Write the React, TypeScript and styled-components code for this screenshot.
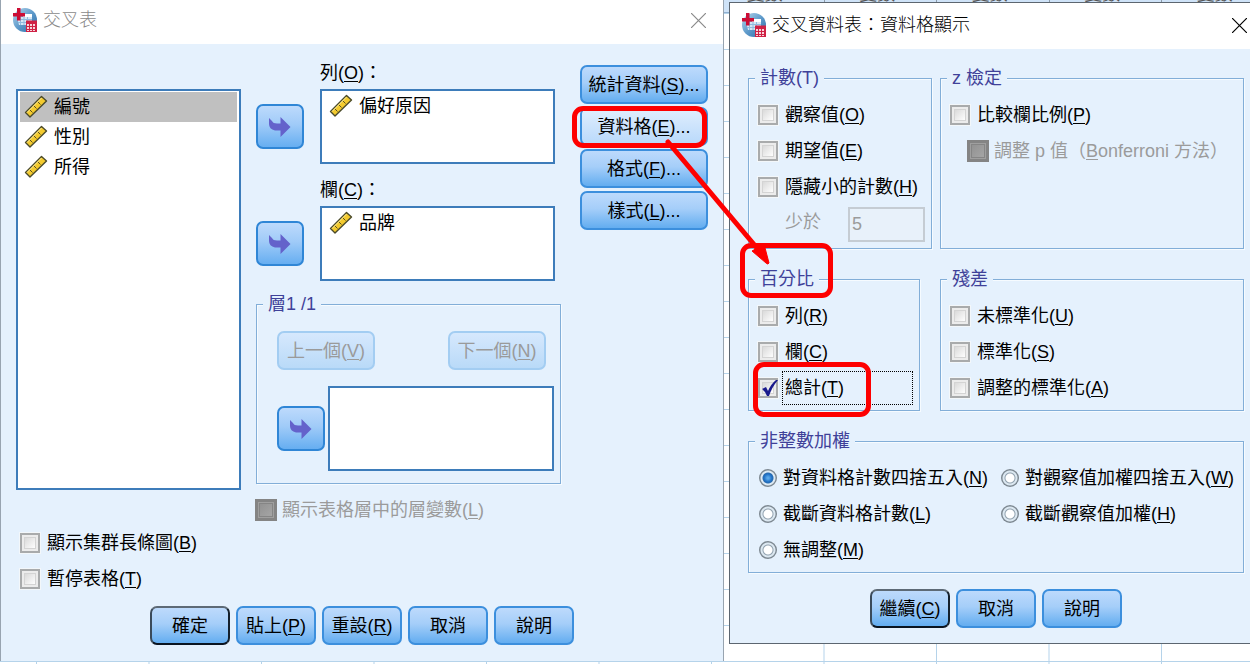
import React, { useState } from 'react';
import styled, { createGlobalStyle, css } from 'styled-components';

const GlobalStyle = createGlobalStyle`
  *, *::before, *::after { box-sizing: border-box; }
  body { margin: 0; background: #fff; }
  body, button, input {
    font-family: 'Liberation Sans', 'Noto Sans CJK TC', sans-serif;
    font-size: 18px;
    line-height: 24px;
    color: #000;
  }
`;

/* ---------- Desktop with the data sheet behind the dialogs ---------- */

const Desktop = styled.main`
  display: grid;
  min-height: 100vh;
  overflow: hidden;
`;

const Sheet = styled.div`
  grid-area: 1 / 1;
  min-width: 0;
  background-color: #fff;
  background-image:
    linear-gradient(to right, #b5d3ea 1px, transparent 1px),
    linear-gradient(to bottom, #b5d3ea 1px, transparent 1px);
  background-size: 9% 100%, 100% 36px;
  background-position: 36px 0, 0 13px;
`;

const SheetHead = styled.div`
  display: flex;
  height: 13px;
  overflow: hidden;
  background: #cfe3f8;
  border-bottom: 1px solid #8eafd0;
  &::before {
    content: '';
    flex: 0 0 36px;
  }
`;

const SheetHeadCell = styled.span`
  flex: 0 0 9%;
  margin-top: -18px;
  padding-right: 6px;
  text-align: center;
  color: #555;
  border-left: 1px solid #8c9aa8;
`;

const Windows = styled.div`
  grid-area: 1 / 1;
  display: grid;
  grid-template-columns: minmax(0, 724fr) minmax(0, 521fr);
  column-gap: 5px;
  align-items: start;
`;

/* ---------- Window frame ---------- */

const Frame = styled.section<{ $active?: boolean }>`
  background: #e5f1fd;
  border: 0 solid ${p => (p.$active ? '#5c6670' : '#98a4b0')};
  border-width: ${p => (p.$active ? '1px 0 1px 1px' : '0 1px')};
  margin-top: ${p => (p.$active ? 2 : 0)}px;
`;

const TitleBar = styled.header<{ $active?: boolean }>`
  display: flex;
  align-items: center;
  gap: 6px;
  height: ${p => (p.$active ? 46 : 44)}px;
  padding: ${p => (p.$active ? '0 3px 2px 12px' : '0 17px 4px 12px')};
  background: #fff;
  color: ${p => (p.$active ? '#000' : '#8a8a8a')};
`;

const Title = styled.h1`
  flex: 1;
  margin: 0;
  font-size: 18px;
  font-weight: 300;
  line-height: 24px;
`;

const CloseButton = styled.button`
  display: flex;
  padding: 0;
  border: 0;
  background: none;
  color: inherit;
`;

/* ---------- Controls ---------- */

const PushButton = styled.button<{ $primary?: boolean; $hot?: boolean; $wide?: boolean }>`
  height: 39px;
  width: ${p => (p.$wide ? '100%' : '80px')};
  padding: 0;
  white-space: nowrap;
  border: 2px solid #3c8fdd;
  border-radius: 7px;
  background: linear-gradient(#bddafc, #a5cef9 45%, #63adf0);
  ${p => p.$hot && css`background: linear-gradient(#e0eefd, #b9d9fb);`}
  ${p => p.$primary && css`border-color: #5d6a76 #14202c #0a1420 #3a4a5a;`}
  &:disabled {
    width: 98px;
    color: #9a9a9a;
    border-color: #a3cdf2;
    background: linear-gradient(#d6e8fd, #b9daf8);
  }
`;

const MoveButton = styled.button`
  display: flex;
  align-items: center;
  justify-content: center;
  width: 48px;
  height: 45px;
  padding: 0;
  border: 2px solid #2f86d6;
  border-radius: 7px;
  background: linear-gradient(#bddafc, #a0cbf8 45%, #66aef1);
`;

const Row = styled.label<{ $disabled?: boolean; $indent?: boolean }>`
  position: relative;
  display: flex;
  align-items: center;
  gap: ${p => (p.$disabled ? 5 : 7)}px;
  height: 36px;
  margin-left: ${p => (p.$indent ? 17 : 0)}px;
  white-space: nowrap;
  color: ${p => (p.$disabled ? '#9b9b9b' : '#000')};
`;

const Box = styled.input.attrs({ type: 'checkbox' })`
  appearance: none;
  flex: none;
  width: 20px;
  height: 20px;
  margin: 0;
  border: 2px solid #a9abac;
  background: linear-gradient(135deg, #cfcfcf, #fdfdfd 80%);
  box-shadow: 0 0 0 1px #f3f7fa, inset 0 0 0 2px #ececec, inset 0 0 0 3px #d4d4d4;
  &:disabled {
    width: 22px;
    height: 22px;
    border: 3px solid #848484;
    background: linear-gradient(135deg, #8f8f8f, #a8a8a8);
    box-shadow: inset 0 0 0 1px #9f9f9f, inset 0 0 0 2px #858585;
  }
`;

const CheckMark = styled.svg`
  position: absolute;
  left: 3px;
  top: 9px;
  pointer-events: none;
`;

const FocusText = styled.span`
  flex: 1;
  height: 34px;
  margin: 0 6px 0 -3px;
  padding: 4px 2px;
  border: 1px dotted #000;
`;

const Radio = styled.input.attrs({ type: 'radio' })`
  appearance: none;
  flex: none;
  width: 18px;
  height: 18px;
  margin: 0;
  border-radius: 50%;
  background: radial-gradient(circle, #fff 3px, #fff 4px, #8fa0ae 5px, #dfeaf2 6px, #d9e6f0 7px, #7c8790 8px, #7c8790 9px);
  &:checked {
    background: radial-gradient(circle, #5aa7e8 1px, #1f6fc4 4px, #2a6cb0 5px, #e3eef6 6px, #d9e6f0 7px, #7c8790 8px, #7c8790 9px);
  }
`;

const RadioRow = styled(Row)`
  gap: 6px;
`;

const Key = styled.u`
  text-decoration-thickness: 1px;
  text-underline-offset: 2px;
`;

/* ---------- Group boxes ---------- */

const Group = styled.fieldset<{ $after?: number }>`
  min-width: 0;
  margin: 0 ${p => p.$after ?? 0}px 0 0;
  padding: 0 0 0 6px;
  border: 1px solid #82aed8;
  box-shadow: 1px 1px 0 #f6fbff, inset 1px 1px 0 #f6fbff;
`;

const Legend = styled.legend`
  position: relative;
  padding: 0 5px;
  background: #e5f1fd;
  color: #3f4199;
`;

const GroupBody = styled.div`
  padding: 7px 0 4px 3px;
`;

/* ---------- Crosstabs dialog ---------- */

const CrosstabsBody = styled.form`
  padding: 17px 15px 16px;
`;

const Columns = styled.div`
  display: grid;
  grid-template-columns: minmax(120px, 1fr) 339px 128px;
`;

const ListBox = styled.ul<{ $height?: number; $source?: boolean }>`
  flex: 1;
  min-width: 0;
  margin: 0;
  padding: ${p => (p.$source ? '1px 2px' : '0 2px')};
  height: ${p => (p.$height ? `${p.$height}px` : 'auto')};
  list-style: none;
  background: #fff;
  border: 2px solid #3d7cba;
  ${p => p.$source && css`margin: 28px 0 0;`}
`;

const Variable = styled.li<{ $selected?: boolean; $inset?: number }>`
  display: flex;
  align-items: center;
  gap: 6px;
  height: 30px;
  padding-left: ${p => p.$inset ?? 4}px;
  background: ${p => (p.$selected ? '#c0c0c0' : 'transparent')};
`;

const Middle = styled.div`
  padding: 0 19px 6px 15px;
`;

const Target = styled.div`
  display: grid;
  grid-template-columns: 48px 1fr;
  column-gap: 16px;
  row-gap: 4px;
  align-items: center;
  margin: 0 6px 14px 0;
  & + & { margin-bottom: 11px; }
`;

const TargetLabel = styled.span`
  grid-column: 2;
`;

const LayerBody = styled.div`
  padding: 15px 6px 12px 14px;
`;

const LayerNav = styled.div`
  display: flex;
  justify-content: space-between;
  padding-right: 8px;
  margin-bottom: 16px;
`;

const LayerRow = styled.div`
  display: flex;
  align-items: center;
  gap: 3px;
`;

const Commands = styled.div`
  display: flex;
  flex-direction: column;
  gap: 3px;
  padding-top: 4px;
`;

const CommandSlot = styled.div`
  position: relative;
  height: 39px;
`;

const LayerOption = styled.div`
  display: flex;
  height: 35px;
  padding: 2px 0 0 239px;
`;

const Options = styled.div`
  padding-left: 4px;
`;

const Actions = styled.footer<{ $gap: number }>`
  display: flex;
  justify-content: center;
  gap: 6px;
  margin-top: ${p => p.$gap}px;
`;

/* ---------- Cell display dialog ---------- */

const CellsBody = styled.form`
  display: flex;
  flex-direction: column;
  gap: 18px;
  padding: 17px 6px 15px 18px;
`;

const Pair = styled.div`
  display: grid;
  grid-template-columns: 192px 1fr;
`;

const LessThan = styled.label`
  display: flex;
  gap: 27px;
  height: 39px;
  padding: 2px 6px 2px 27px;
  line-height: 30px;
  white-space: nowrap;
  color: #9b9b9b;
`;

const CountInput = styled.input`
  flex: 1;
  min-width: 0;
  height: 35px;
  padding: 0 2px;
  border: 2px solid #c5ccd3;
  background: #e8f1fa;
  color: #9b9b9b;
`;

const RadioGrid = styled.div`
  display: grid;
  grid-template-columns: 242px 1fr;
  padding: 7px 0 4px 4px;
`;

/* ---------- Red pen annotations ---------- */

const Ring = styled.span<{ $inset: string }>`
  position: absolute;
  inset: ${p => p.$inset};
  z-index: 5;
  border: 5px solid #fe0000;
  border-radius: 11px;
  pointer-events: none;
`;

const Pointer = styled.svg`
  position: absolute;
  left: 84px;
  top: 32px;
  z-index: 6;
  pointer-events: none;
`;

/* ---------- Icons ---------- */

const AppIcon = () => (
  <svg width="24" height="24" viewBox="0 0 24 24" aria-hidden="true">
    <defs>
      <linearGradient id="globe" x1="0" y1="0" x2="1" y2="1">
        <stop offset="0" stopColor="#b9d7ec" />
        <stop offset="0.5" stopColor="#5f9bcb" />
        <stop offset="1" stopColor="#2c6ba6" />
      </linearGradient>
    </defs>
    <circle cx="12" cy="12" r="12" fill="url(#globe)" />
    <path d="M4 9h15v8H6z" fill="#d5e6f4" />
    <path d="M10 6h9v3h-9z" fill="#fff" />
    <path d="M4 11.500h15M5 14.500h9M7.500 9v8M11 9v8M14.500 9v5" stroke="#8fbbdf" fill="none" />
    <path d="M4 0h3.500v5H12v3.500H7.500V12.500H4V8.500H0V5h4z" fill="#cc0d35" />
    <path d="M13 12.500h11V24H13z" fill="#cf2145" />
    <path d="M14 16h2v2h-2zM17 16h2v2h-2zM20 16h2v2h-2zM14 19h2v2h-2zM17 19h2v2h-2zM20 19h2v2h-2zM14 22h2v1h-2zM17 22h2v1h-2zM20 22h2v1h-2z" fill="#f6d3da" />
  </svg>
);

const CloseIcon = () => (
  <svg width="15" height="15" viewBox="0 0 15 15" aria-hidden="true">
    <path d="M0 0l15 15M15 0L0 15" stroke="currentColor" strokeWidth="1.200" />
  </svg>
);

const RulerIcon = () => (
  <svg width="24" height="24" viewBox="0 0 24 24" aria-hidden="true">
    <path d="M1.500 17.500L17.500 1.500l5 4.500L6 22z" fill="#f3ca2e" stroke="#4a4a2a" strokeWidth="1.400" strokeLinejoin="round" />
    <path d="M3 17.500L17.500 3" stroke="#fff0a0" strokeWidth="1" />
    <path d="M6 15l2.500 2.500M10 11l2.500 2.500M14 7l2.500 2.500" stroke="#5c5220" strokeWidth="1" />
  </svg>
);

const ArrowIcon = () => (
  <svg width="22" height="20" viewBox="0 0 22 20" aria-hidden="true">
    <path d="M0 1l3 3q1 2.500 5 2.500h3.500V0L21.500 10 11.500 20v-6.500H6Q0 12 0 7z" fill="#6462cb" />
  </svg>
);

/* ---------- Composite parts ---------- */

const Hot = ({ text, k, tail = '' }: { text: string; k: string; tail?: string }) => (
  <span>{text}(<Key>{k}</Key>){tail}</span>
);

type CheckProps = { text: string; k: string; disabled?: boolean };

const Check = ({ text, k, disabled }: CheckProps) => (
  <Row $disabled={disabled}>
    <Box disabled={disabled} />
    <Hot text={text} k={k} />
  </Row>
);

const TitleRow = ({ title, active }: { title: string; active?: boolean }) => (
  <TitleBar $active={active}>
    <AppIcon />
    <Title>{title}</Title>
    <CloseButton type="button" aria-label="關閉"><CloseIcon /></CloseButton>
  </TitleBar>
);

const TargetField = ({ text, k, variable }: { text: string; k: string; variable: string }) => (
  <Target>
    <TargetLabel><Hot text={text} k={k} tail="：" /></TargetLabel>
    <MoveButton type="button" aria-label={text}><ArrowIcon /></MoveButton>
    <ListBox $height={75} aria-label={text}>
      <Variable $inset={5}><RulerIcon />{variable}</Variable>
    </ListBox>
  </Target>
);

const variables = ['編號', '性別', '所得'];

const roundings = [
  ['對資料格計數四捨五入', 'N'],
  ['對觀察值加權四捨五入', 'W'],
  ['截斷資料格計數', 'L'],
  ['截斷觀察值加權', 'H'],
  ['無調整', 'M'],
];

const CrosstabsDialog = () => (
  <Frame>
    <TitleRow title="交叉表" />
    <CrosstabsBody onSubmit={e => e.preventDefault()}>
      <Columns>
        <ListBox $source role="listbox" aria-label="變數">
          {variables.map((name, i) => (
            <Variable key={name} role="option" aria-selected={i === 0} $selected={i === 0}>
              <RulerIcon />{name}
            </Variable>
          ))}
        </ListBox>
        <Middle>
          <TargetField text="列" k="O" variable="偏好原因" />
          <TargetField text="欄" k="C" variable="品牌" />
          <Group>
            <Legend>層1 /1</Legend>
            <LayerBody>
              <LayerNav>
                <PushButton type="button" disabled><Hot text="上一個" k="V" /></PushButton>
                <PushButton type="button" disabled><Hot text="下一個" k="N" /></PushButton>
              </LayerNav>
              <LayerRow>
                <MoveButton type="button" aria-label="層"><ArrowIcon /></MoveButton>
                <ListBox $height={85} aria-label="層" />
              </LayerRow>
            </LayerBody>
          </Group>
        </Middle>
        <Commands>
          <CommandSlot>
            <PushButton type="button" $wide><Hot text="統計資料" k="S" tail="..." /></PushButton>
          </CommandSlot>
          <CommandSlot>
            <PushButton type="button" $wide $hot><Hot text="資料格" k="E" tail="..." /></PushButton>
            <Ring $inset="-1px 1px -2px -8px" />
            <Pointer width="110" height="130" viewBox="0 0 110 130" aria-hidden="true">
              <path d="M4 3l94 112" stroke="#fe0000" strokeWidth="5" strokeLinecap="round" />
              <path d="M88 112l12-7 5 19q-1 2-3 0z" fill="#fe0000" stroke="#fe0000" strokeLinejoin="round" />
            </Pointer>
          </CommandSlot>
          <CommandSlot>
            <PushButton type="button" $wide><Hot text="格式" k="F" tail="..." /></PushButton>
          </CommandSlot>
          <CommandSlot>
            <PushButton type="button" $wide><Hot text="樣式" k="L" tail="..." /></PushButton>
          </CommandSlot>
        </Commands>
      </Columns>
      <LayerOption><Check text="顯示表格層中的層變數" k="L" disabled /></LayerOption>
      <Options>
        <Check text="顯示集群長條圖" k="B" />
        <Check text="暫停表格" k="T" />
      </Options>
      <Actions $gap={9}>
        <PushButton type="submit" $primary>確定</PushButton>
        <PushButton type="button"><Hot text="貼上" k="P" /></PushButton>
        <PushButton type="button"><Hot text="重設" k="R" /></PushButton>
        <PushButton type="button">取消</PushButton>
        <PushButton type="button">說明</PushButton>
      </Actions>
    </CrosstabsBody>
  </Frame>
);

const CellDisplayDialog = () => {
  const [total, setTotal] = useState(true);
  return (
    <Frame $active>
      <TitleRow title="交叉資料表：資料格顯示" active />
      <CellsBody onSubmit={e => e.preventDefault()}>
        <Pair>
          <Group $after={8}>
            <Legend>計數(T)</Legend>
            <GroupBody>
              <Check text="觀察值" k="O" />
              <Check text="期望值" k="E" />
              <Check text="隱藏小的計數" k="H" />
              <LessThan>少於<CountInput type="text" defaultValue="5" disabled /></LessThan>
            </GroupBody>
          </Group>
          <Group>
            <Legend>z 檢定</Legend>
            <GroupBody>
              <Check text="比較欄比例" k="P" />
              <Row $disabled $indent>
                <Box disabled />
                <span>調整 p 值（<Key>B</Key>onferroni 方法）</span>
              </Row>
            </GroupBody>
          </Group>
        </Pair>
        <Pair>
          <Group $after={20}>
            <Legend>百分比<Ring $inset="-24px -14px -7px -15px" /></Legend>
            <GroupBody>
              <Check text="列" k="R" />
              <Check text="欄" k="C" />
              <Row>
                <Box checked={total} onChange={e => setTotal(e.target.checked)} />
                {total && (
                  <CheckMark width="18" height="18" viewBox="0 0 18 18" aria-hidden="true">
                    <path d="M1 10l4-2 2 4Q10 5 15 1h2Q11 8 8 17H6Q4 12 1 10z" fill="#1a1a8c" />
                  </CheckMark>
                )}
                <FocusText><Hot text="總計" k="T" /></FocusText>
                <Ring $inset="-8px 48px -11px -5px" />
              </Row>
            </GroupBody>
          </Group>
          <Group>
            <Legend>殘差</Legend>
            <GroupBody>
              <Check text="未標準化" k="U" />
              <Check text="標準化" k="S" />
              <Check text="調整的標準化" k="A" />
            </GroupBody>
          </Group>
        </Pair>
        <Group>
          <Legend>非整數加權</Legend>
          <RadioGrid>
            {roundings.map(([text, k], i) => (
              <RadioRow key={k}>
                <Radio name="weights" defaultChecked={i === 0} />
                <Hot text={text} k={k} />
              </RadioRow>
            ))}
          </RadioGrid>
        </Group>
        <Actions $gap={-2}>
          <PushButton type="submit" $primary><Hot text="繼續" k="C" /></PushButton>
          <PushButton type="button">取消</PushButton>
          <PushButton type="button">說明</PushButton>
        </Actions>
      </CellsBody>
    </Frame>
  );
};

export default function App() {
  return (
    <Desktop>
      <GlobalStyle />
      <Sheet aria-hidden="true">
        <SheetHead>
          {Array.from({ length: 11 }, (_, i) => <SheetHeadCell key={i}>變數</SheetHeadCell>)}
        </SheetHead>
      </Sheet>
      <Windows>
        <CrosstabsDialog />
        <CellDisplayDialog />
      </Windows>
    </Desktop>
  );
}
